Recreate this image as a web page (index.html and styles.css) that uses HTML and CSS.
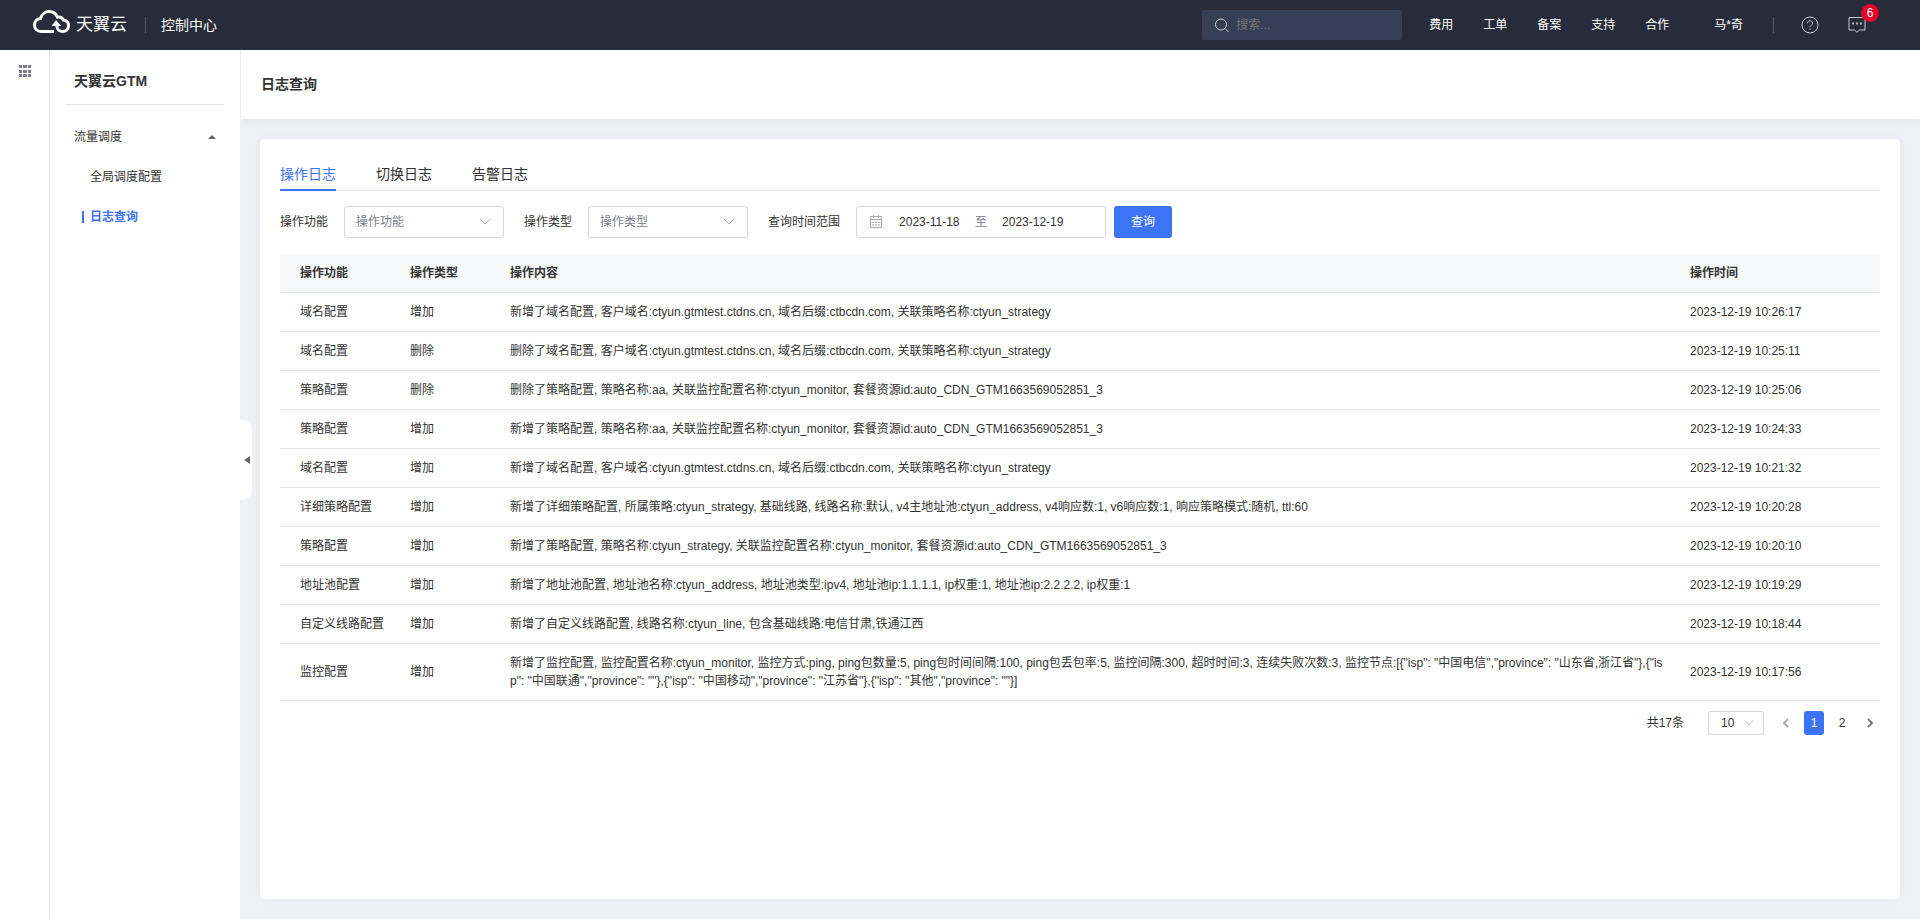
FILE: index.html
```html
<!DOCTYPE html>
<html lang="zh-CN">
<head>
<meta charset="utf-8">
<title>日志查询 - 天翼云GTM</title>
<meta name="viewport" content="width=device-width, initial-scale=1">
<link rel="stylesheet" href="styles.css">
</head>
<body>
<header class="topbar">
  <a class="brand" href="#">
    <svg class="brand-mark" viewBox="0 0 39 24" aria-hidden="true">
      <path d="M22 21.500H9C5 21.500 2.500 18.500 2.500 15S5 9 8.500 8.500C9.500 4.500 13 1.600 17 1.600s7 2.200 8.500 5.600c2.500-.4 4.800.6 5.900 2.900 3 .4 5.100 2.700 5.100 5.700 0 3.400-2.600 5.700-5.700 5.700-3.300 0-5.800-2-5.800-5V14"/>
      <path class="brand-arrow" d="M24 10l5.200 6h-9.700z"/>
    </svg>
    <span class="brand-name">天翼云</span>
  </a>
  <span class="divider"></span>
  <a class="console" href="#">控制中心</a>
  <label class="search">
    <svg viewBox="0 0 16 16" aria-hidden="true"><circle cx="7" cy="7.500" r="5.500"/><path d="M11 11.500l3.500 3.500"/></svg>
    <input type="search" placeholder="搜索..." aria-label="搜索">
  </label>
  <nav class="topnav">
    <a href="#">费用</a><a href="#">工单</a><a href="#">备案</a><a href="#">支持</a><a href="#">合作</a>
  </nav>
  <a class="user" href="#">马*奇</a>
  <span class="divider"></span>
  <button class="icon-btn help" type="button" aria-label="帮助">
    <svg viewBox="0 0 18 18"><circle cx="9" cy="9" r="8"/><path d="M6.500 7.200a2.500 2.500 0 1 1 3.800 2.100C9.300 9.900 9 10.300 9 11.200M9 12.500v1.300"/></svg>
  </button>
  <button class="icon-btn message" type="button" aria-label="消息">
    <svg viewBox="0 0 18 18"><path d="M1 1.500h16v12.500h-5.500L9 16.300 6.500 14H1z"/><path class="dots" d="M4.200 7.500h1.800M8.100 7.500h1.800M12 7.500h1.800"/></svg>
    <span class="badge">6</span>
  </button>
</header>

<div class="shell">
  <aside class="rail">
    <button class="icon-btn" type="button" aria-label="全部产品">
      <svg viewBox="0 0 12 12"><path d="M0 0h3v3H0zM4 0h4v3H4zM9 0h3v3H9zM0 5h3v3H0zM4 5h4v3H4zM9 5h3v3H9zM0 9h3v3H0zM4 9h4v3H4zM9 9h3v3H9z"/></svg>
    </button>
  </aside>
  <aside class="sidebar">
    <h2 class="product">天翼云GTM</h2>
    <nav class="menu">
      <button class="menu-group" type="button" aria-expanded="true">流量调度 <svg viewBox="0 0 8 4" aria-hidden="true"><path d="M0 4l4-4 4 4z"/></svg></button>
      <a class="menu-item" href="#">全局调度配置</a>
      <a class="menu-item active" href="#" aria-current="page">日志查询</a>
    </nav>
    <button class="collapse" type="button" aria-label="收起菜单"><svg viewBox="0 0 6 8" aria-hidden="true"><path d="M6 0v8L0 4z"/></svg></button>
  </aside>
  <main class="main">
    <div class="page-head"><h1>日志查询</h1></div>
    <section class="card">
      <div class="tabs" role="tablist">
        <button class="tab active" type="button" role="tab" aria-selected="true">操作日志</button>
        <button class="tab" type="button" role="tab" aria-selected="false">切换日志</button>
        <button class="tab" type="button" role="tab" aria-selected="false">告警日志</button>
      </div>
      <form class="filters">
        <div class="field">
          <label for="func">操作功能</label>
          <span class="select">
            <select id="func"><option>操作功能</option></select>
            <svg viewBox="0 0 12 8" aria-hidden="true"><path d="M1 1l5 5 5-5"/></svg>
          </span>
        </div>
        <div class="field">
          <label for="type">操作类型</label>
          <span class="select">
            <select id="type"><option>操作类型</option></select>
            <svg viewBox="0 0 12 8" aria-hidden="true"><path d="M1 1l5 5 5-5"/></svg>
          </span>
        </div>
        <div class="field">
          <label for="from">查询时间范围</label>
          <span class="range">
            <svg viewBox="0 0 14 14" aria-hidden="true"><path d="M1.500 1.500h11v11h-11zM1.500 4.500h11M4.500 0v3M9.500 0v3M3 7.500h2M6 7.500h2M9 7.500h2M3 10h2M6 10h2M9 10h2"/></svg>
            <input id="from" type="text" value="2023-11-18">
            <span class="to">至</span>
            <input type="text" value="2023-12-19" aria-label="结束日期">
          </span>
        </div>
        <button class="primary" type="button">查询</button>
      </form>
      <table class="log">
        <colgroup><col class="c-func"><col class="c-type"><col><col class="c-time"></colgroup>
        <thead><tr><th>操作功能</th><th>操作类型</th><th>操作内容</th><th>操作时间</th></tr></thead>
        <tbody>
          <tr><td>域名配置</td><td>增加</td><td>新增了域名配置, 客户域名:ctyun.gtmtest.ctdns.cn, 域名后缀:ctbcdn.com, 关联策略名称:ctyun_strategy</td><td>2023-12-19 10:26:17</td></tr>
          <tr><td>域名配置</td><td>删除</td><td>删除了域名配置, 客户域名:ctyun.gtmtest.ctdns.cn, 域名后缀:ctbcdn.com, 关联策略名称:ctyun_strategy</td><td>2023-12-19 10:25:11</td></tr>
          <tr><td>策略配置</td><td>删除</td><td>删除了策略配置, 策略名称:aa, 关联监控配置名称:ctyun_monitor, 套餐资源id:auto_CDN_GTM1663569052851_3</td><td>2023-12-19 10:25:06</td></tr>
          <tr><td>策略配置</td><td>增加</td><td>新增了策略配置, 策略名称:aa, 关联监控配置名称:ctyun_monitor, 套餐资源id:auto_CDN_GTM1663569052851_3</td><td>2023-12-19 10:24:33</td></tr>
          <tr><td>域名配置</td><td>增加</td><td>新增了域名配置, 客户域名:ctyun.gtmtest.ctdns.cn, 域名后缀:ctbcdn.com, 关联策略名称:ctyun_strategy</td><td>2023-12-19 10:21:32</td></tr>
          <tr><td>详细策略配置</td><td>增加</td><td>新增了详细策略配置, 所属策略:ctyun_strategy, 基础线路, 线路名称:默认, v4主地址池:ctyun_address, v4响应数:1, v6响应数:1, 响应策略模式:随机, ttl:60</td><td>2023-12-19 10:20:28</td></tr>
          <tr><td>策略配置</td><td>增加</td><td>新增了策略配置, 策略名称:ctyun_strategy, 关联监控配置名称:ctyun_monitor, 套餐资源id:auto_CDN_GTM1663569052851_3</td><td>2023-12-19 10:20:10</td></tr>
          <tr><td>地址池配置</td><td>增加</td><td>新增了地址池配置, 地址池名称:ctyun_address, 地址池类型:ipv4, 地址池ip:1.1.1.1, ip权重:1, 地址池ip:2.2.2.2, ip权重:1</td><td>2023-12-19 10:19:29</td></tr>
          <tr><td>自定义线路配置</td><td>增加</td><td>新增了自定义线路配置, 线路名称:ctyun_line, 包含基础线路:电信甘肃,铁通江西</td><td>2023-12-19 10:18:44</td></tr>
          <tr><td>监控配置</td><td>增加</td><td>新增了监控配置, 监控配置名称:ctyun_monitor, 监控方式:ping, ping包数量:5, ping包时间间隔:100, ping包丢包率:5, 监控间隔:300, 超时时间:3, 连续失败次数:3, 监控节点:[{"isp": "中国电信","province": "山东省,浙江省"},{"isp": "中国联通","province": ""},{"isp": "中国移动","province": "江苏省"},{"isp": "其他","province": ""}]</td><td>2023-12-19 10:17:56</td></tr>
        </tbody>
      </table>
      <div class="pager">
        <span class="total">共17条</span>
        <span class="select small">
          <select aria-label="每页条数"><option>10</option></select>
          <svg viewBox="0 0 12 8" aria-hidden="true"><path d="M1 1l5 5 5-5"/></svg>
        </span>
        <nav class="pages">
          <button class="prev" type="button" aria-label="上一页" disabled><svg viewBox="0 0 8 10"><path d="M6 1L2 5l4 4"/></svg></button>
          <button class="current" type="button">1</button>
          <button type="button">2</button>
          <button type="button" aria-label="下一页"><svg viewBox="0 0 8 10"><path d="M2 1l4 4-4 4"/></svg></button>
        </nav>
      </div>
    </section>
  </main>
</div>
</body>
</html>
```
FILE: styles.css
```css
* { box-sizing: border-box; }

body {
  margin: 0;
  min-height: 100vh;
  display: flex;
  flex-direction: column;
  background: #eef0f5;
  color: #333;
  font: 12px/18px "Liberation Sans", "Noto Sans CJK SC", sans-serif;
}

a { color: inherit; text-decoration: none; }
h1, h2 { margin: 0; font-size: 14px; line-height: 20px; }
button, input, select { font: inherit; color: inherit; }
button { padding: 0; border: 0; background: none; cursor: pointer; }
svg { display: block; fill: none; stroke: currentColor; }

/* Top bar */
.topbar {
  display: flex;
  align-items: center;
  height: 50px;
  padding: 0 40px 0 32px;
  background: #282b3a;
  color: #fff;
}
.brand { display: flex; align-items: center; gap: 5px; }
.brand-mark { width: 39px; height: 24px; margin-bottom: 6px; stroke-width: 3; }
.brand-arrow { fill: currentColor; stroke: none; }
.brand-name { font-size: 17px; line-height: 24px; }
.divider { width: 1px; height: 16px; margin-left: 18px; background: #535665; }
.console { margin-left: 15px; font-size: 14px; line-height: 20px; }
.search {
  display: flex;
  align-items: center;
  gap: 6px;
  width: 200px;
  height: 30px;
  margin-left: auto;
  padding: 0 12px;
  border-radius: 2px;
  background: #353f56;
  color: #d0d2d8;
}
.search svg { flex: none; width: 16px; height: 16px; }
.search input { width: 100%; min-width: 0; padding: 0; border: 0; outline: 0; background: none; }
.search input::placeholder { color: #757575; opacity: 1; }
.topnav { display: flex; gap: 30px; margin-left: 27px; }
.user { margin-left: 45px; }
.user + .divider { margin-left: 30px; }
.icon-btn { position: relative; color: #c9cad0; }
.topbar .icon-btn svg { width: 18px; height: 18px; }
.help { margin-left: 27px; }
.message { margin: 0 14px 0 29px; }
.message .dots { stroke-width: 2; }
.badge {
  position: absolute;
  top: -12px;
  left: 13px;
  width: 18px;
  height: 18px;
  border-radius: 9px;
  background: #e60027;
  color: #fff;
}

/* Side columns */
.shell { flex: 1; display: flex; }
.rail {
  flex: none;
  width: 50px;
  padding: 14px 18px 0 19px;
  border-right: 1px solid #dfe1e9;
  background: #fff;
}
.rail svg { width: 12px; height: 12px; fill: #7b7e8a; stroke: none; }
.sidebar {
  position: relative;
  flex: none;
  width: 191px;
  padding: 0 16px;
  border-right: 1px solid #eef0f5;
  background: #fff;
}
.product { padding: 21px 8px 13px; border-bottom: 1px solid #dfe1e9; }
.menu { display: flex; flex-direction: column; padding: 12px 8px 0; }
.menu-group {
  display: flex;
  align-items: center;
  justify-content: space-between;
  height: 40px;
}
.menu-group svg { width: 8px; height: 4px; fill: #666; stroke: none; }
.menu-item { display: flex; align-items: center; height: 40px; margin-left: 8px; padding-left: 8px; }
.menu-item.active { color: #3d73f5; font-weight: bold; padding-left: 0; }
.menu-item.active::before { content: ""; width: 2px; height: 12px; margin-right: 6px; background: #3d73f5; }
.collapse {
  position: absolute;
  top: 370px;
  right: -12px;
  display: flex;
  align-items: center;
  width: 12px;
  height: 80px;
  padding-left: 4px;
  border-radius: 0 10px 10px 0;
  background: #fff;
}
.collapse svg { width: 6px; height: 8px; fill: #666; stroke: none; }

/* Content */
.main { flex: 1; min-width: 0; display: flex; flex-direction: column; }
.page-head { padding: 24px 20px 25px; background: #fff; box-shadow: 0 2px 6px rgba(40, 43, 58, .04); }
.card {
  flex: 1;
  margin: 20px 20px 20px 19px;
  padding: 20px;
  border-radius: 4px;
  background: #fff;
  box-shadow: 0 0 10px rgba(40, 43, 58, .04);
}
.tabs { display: flex; gap: 40px; box-shadow: inset 0 -1px #dfe1e9; }
.tab { height: 32px; border-bottom: 2px solid transparent; font-size: 14px; line-height: 30px; }
.tab.active { border-color: #3d73f5; color: #3d73f5; }

.filters { display: flex; align-items: center; gap: 20px; padding: 15px 0 16px; }
.field { display: flex; align-items: center; gap: 16px; }
.select { display: grid; align-items: center; width: 160px; }
.select > * { grid-area: 1 / 1; }
.select select {
  width: 100%;
  height: 32px;
  padding: 0 11px;
  border: 1px solid #d5d7db;
  border-radius: 3px;
  appearance: none;
  background: #fff;
  color: #7b7e8a;
}
.select svg { justify-self: end; width: 12px; height: 8px; margin-right: 13px; color: #aaa; pointer-events: none; }
.range {
  display: flex;
  align-items: center;
  width: 250px;
  height: 32px;
  padding: 0 12px;
  border: 1px solid #d5d7db;
  border-radius: 3px;
}
.range svg { flex: none; width: 14px; height: 14px; margin-right: 16px; color: #aaa; }
.range input { width: 64px; padding: 0; border: 0; outline: 0; background: none; }
.to { margin: 0 15px 0 12px; color: #7b7e8a; }
.primary { width: 58px; height: 32px; margin-left: -12px; border-radius: 3px; background: #3d73f5; color: #fff; }

.log { width: 100%; border-spacing: 0; table-layout: fixed; }
.c-func { width: 110px; }
.c-type { width: 100px; }
.c-time { width: 210px; }
.log th, .log td {
  padding: 10px 4px 10px 20px;
  border-bottom: 1px solid #dfe1e9;
  text-align: left;
  word-break: break-all;
}
.log th { background: #f6f8fa; }

.pager { display: flex; align-items: center; justify-content: flex-end; padding-top: 10px; }
.select.small { width: 56px; margin: 0 12px 0 24px; }
.small select { height: 24px; padding: 0 12px; color: #333; }
.small svg { width: 10px; margin-right: 10px; }
.pages { display: flex; gap: 8px; }
.pages button { display: grid; place-items: center; width: 20px; height: 24px; border-radius: 3px; }
.pages svg { width: 8px; height: 10px; color: #777; stroke-width: 2; }
.pages .prev svg { color: #aaa; }
.pages .current { background: #3d73f5; color: #fff; }
```
